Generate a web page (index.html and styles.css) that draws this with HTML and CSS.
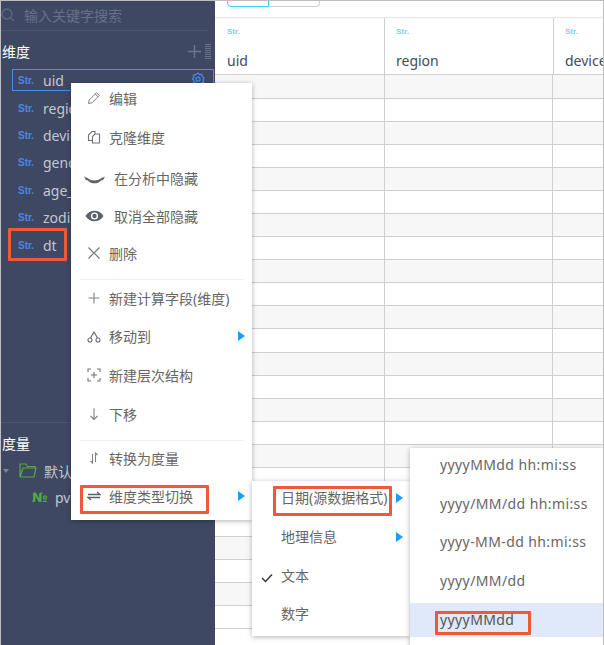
FILE: index.html
```html
<!DOCTYPE html>
<html lang="zh">
<head>
<meta charset="utf-8">
<title>维度</title>
<link rel="stylesheet" href="styles.css">
</head>
<body>
<div class="frame">
  <aside class="side">
    <div class="search">
      <svg class="ico-search" width="14" height="14" viewBox="0 0 14 14"><circle cx="6" cy="6" r="5" fill="none" stroke="#5f6880" stroke-width="1.3"/><path d="M9.6 9.6L13 13" stroke="#5f6880" stroke-width="1.3"/></svg>
      <span>输入关键字搜索</span>
    </div>
    <div class="sec-head">
      <span>维度</span>
      <svg class="head-plus" width="13" height="13" viewBox="0 0 13 13"><path d="M6.5 0v13M0 6.5h13" stroke="#6f778c" stroke-width="1.4"/></svg>
      <span class="head-grip"></span>
    </div>
    <ul class="fields">
      <li class="field selected"><b>Str.</b><span>uid</span>
        <svg class="gear" width="14" height="14" viewBox="0 0 14 14"><path d="M7 1l1.500 1.600 2.200-.3.500 2.100L13 6l-1 2 .6 2-2 .7-.9 2-2-.7-1.700.700-1.100-1.800-2.100-.300.100-2.100L1.500 7l1.300-1.700-.4-2.100 2.100-.5z" fill="none" stroke="#3f8cf0" stroke-width="1.300"/><circle cx="7" cy="7.200" r="2" fill="none" stroke="#3f8cf0" stroke-width="1.300"/></svg>
      </li>
      <li class="field"><b>Str.</b><span>region</span></li>
      <li class="field"><b>Str.</b><span>device</span></li>
      <li class="field"><b>Str.</b><span>gender</span></li>
      <li class="field"><b>Str.</b><span>age_level</span></li>
      <li class="field"><b>Str.</b><span>zodiac</span></li>
      <li class="field"><b>Str.</b><span>dt</span></li>
    </ul>
    <div class="measures">
      <div class="sec-head sec-measure"><span>度量</span></div>
      <div class="folder">
        <i class="caret"></i>
        <svg width="18" height="15" viewBox="0 0 18 15"><path d="M1 14V1h6l1.500 2.500H16V5M1 14h14l2-9H4L1 14" fill="none" stroke="#55a944" stroke-width="1.200"/></svg>
        <span>默认</span>
      </div>
      <div class="measure"><b>№</b><span>pv</span></div>
    </div>
  </aside>
  <main class="main">
    <div class="toolbar">
      <div class="switch"><span class="on"></span><span class="off"></span></div>
    </div>
    <div class="thead">
      <div class="th"><small>Str.</small><span>uid</span></div>
      <div class="th"><small>Str.</small><span>region</span></div>
      <div class="th"><small>Str.</small><span>device</span></div>
    </div>
    <div class="tbody">
      <div class="tr"><i></i><i></i><i></i></div><div class="tr"><i></i><i></i><i></i></div>
      <div class="tr"><i></i><i></i><i></i></div><div class="tr"><i></i><i></i><i></i></div>
      <div class="tr"><i></i><i></i><i></i></div><div class="tr"><i></i><i></i><i></i></div>
      <div class="tr"><i></i><i></i><i></i></div><div class="tr"><i></i><i></i><i></i></div>
      <div class="tr"><i></i><i></i><i></i></div><div class="tr"><i></i><i></i><i></i></div>
      <div class="tr"><i></i><i></i><i></i></div><div class="tr"><i></i><i></i><i></i></div>
      <div class="tr"><i></i><i></i><i></i></div><div class="tr"><i></i><i></i><i></i></div>
      <div class="tr"><i></i><i></i><i></i></div><div class="tr"><i></i><i></i><i></i></div>
      <div class="tr"><i></i><i></i><i></i></div><div class="tr"><i></i><i></i><i></i></div>
      <div class="tr"><i></i><i></i><i></i></div><div class="tr"><i></i><i></i><i></i></div>
      <div class="tr"><i></i><i></i><i></i></div><div class="tr"><i></i><i></i><i></i></div>
      <div class="tr"><i></i><i></i><i></i></div><div class="tr"><i></i><i></i><i></i></div>
    </div>
  </main>

  <div class="menu menu-main">
    <div class="mi"><svg class="mi-ico" viewBox="0 0 14 14"><path d="M1.500 12.500l.7-3.500L9.500 1.700l2.800 2.800L5 11.800zM8.300 3l2.800 2.800" fill="none" stroke="#7c8088" stroke-width="1"/></svg><span>编辑</span></div>
    <div class="mi"><svg class="mi-ico" viewBox="0 0 14 14"><path d="M5 10.500H1.500V5L5 1.500h3V4M5.500 6.500L8 4h4.500v9h-7z" fill="none" stroke="#6f7278" stroke-width="1.100"/></svg><span>克隆维度</span></div>
    <div class="mi mi-wide"><svg class="mi-ico-w" viewBox="0 -3 22 12"><path d="M0 1.500L3.500 3C8 6.500 14 6.500 18.500 3L22 1.500 20 5l-2 .5C14 9.500 8 9.500 4 5.500L2 5z" fill="#5d6168"/></svg><span>在分析中隐藏</span></div>
    <div class="mi mi-wide"><svg class="mi-ico-w" viewBox="0 0 18 12"><path d="M0 6c4-7 14-7 18 0-4 7-14 7-18 0z" fill="#5d6168"/><circle cx="9" cy="6" r="3.600" fill="#fff"/><circle cx="9" cy="6" r="2.200" fill="#5d6168"/></svg><span>取消全部隐藏</span></div>
    <div class="mi"><svg class="mi-ico" viewBox="0 0 14 14"><path d="M1.500 1.500l11 11M12.500 1.500l-11 11" stroke="#6f7278" stroke-width="1.100"/></svg><span>删除</span></div>
    <hr class="sep">
    <div class="mi"><svg class="mi-ico" viewBox="0 0 14 14"><path d="M7 1.500v11M1.500 7h11" stroke="#7c8088" stroke-width="1.100"/></svg><span>新建计算字段(维度)</span></div>
    <div class="mi"><svg class="mi-ico" viewBox="0 0 14 14"><circle cx="3" cy="11" r="2" fill="none" stroke="#6f7278" stroke-width="1.100"/><circle cx="11" cy="11" r="2" fill="none" stroke="#6f7278" stroke-width="1.100"/><path d="M3.500 9L7 3l3.500 6" fill="none" stroke="#6f7278" stroke-width="1.300"/></svg><span>移动到</span><i class="tri"></i></div>
    <div class="mi"><svg class="mi-ico" viewBox="0 0 14 14"><path d="M4 1H1v3M10 1h3v3M4 13H1v-3M10 13h3v-3M7 4v6M4 7h6" fill="none" stroke="#6f7278" stroke-width="1.100"/></svg><span>新建层次结构</span></div>
    <div class="mi"><svg class="mi-ico" viewBox="0 0 14 14"><path d="M7 1.500v11M3.500 9L7 12.500 10.500 9" fill="none" stroke="#7c8088" stroke-width="1.100"/></svg><span>下移</span></div>
    <hr class="sep sep-2">
    <div class="mi"><svg class="mi-ico" viewBox="0 0 14 14"><path d="M5.500 3v9L3.500 10M8.500 11V2l2 2" fill="none" stroke="#7c8088" stroke-width="1.100"/></svg><span>转换为度量</span></div>
    <div class="mi"><svg class="mi-ico" viewBox="0 0 14 14"><path d="M1 5.500h12L10 3M13 8.500H1L4 11" fill="none" stroke="#5d6168" stroke-width="1.300"/></svg><span>维度类型切换</span><i class="tri"></i></div>
  </div>

  <div class="menu menu-sub">
    <div class="si"><span>日期(源数据格式)</span><i class="tri"></i></div>
    <div class="si"><span>地理信息</span><i class="tri"></i></div>
    <div class="si"><svg class="check" width="12" height="10" viewBox="0 0 12 10"><path d="M1 5l3.500 3.500L11 1.500" fill="none" stroke="#333" stroke-width="1.400"/></svg><span>文本</span></div>
    <div class="si"><span>数字</span></div>
  </div>

  <div class="menu menu-date">
    <div class="di">yyyyMMdd hh:mi:ss</div>
    <div class="di">yyyy/MM/dd hh:mi:ss</div>
    <div class="di">yyyy-MM-dd hh:mi:ss</div>
    <div class="di">yyyy/MM/dd</div>
    <div class="di active">yyyyMMdd</div>
  </div>

  <div class="mark mark-dt"></div>
  <div class="mark mark-switch"></div>
  <div class="mark mark-date"></div>
  <div class="mark mark-fmt"></div>
</div>
</body>
</html>
```
FILE: styles.css
```css
* { box-sizing: border-box; }
html, body { margin: 0; padding: 0; background: #fff; }
body { font-family: "Noto Sans", "Noto Sans CJK SC", sans-serif; }

.frame {
  position: relative;
  width: 604px;
  height: 645px;
  display: flex;
  overflow: hidden;
  border: 1px solid #bdbdbd;
  border-bottom: 0;
}

/* sidebar */
.side {
  width: 214px;
  flex: none;
  background: #3e4862;
  color: #c3c7d0;
  display: flex;
  flex-direction: column;
}
.search {
  height: 30px;
  margin-right: 6px;
  display: flex;
  align-items: center;
  border-bottom: 1px solid #4c556e;
  font-size: 14px;
  color: #687088;
  padding-bottom: 1px;
}
.ico-search { margin-right: 9px; }
.sec-head {
  display: flex;
  align-items: center;
  height: 22px;
  margin-top: 11px;
  padding: 0 0 4px 1px;
  font-size: 14px;
  color: #fff;
}
.head-plus { margin-left: auto; }
.head-grip {
  width: 6px;
  height: 15px;
  margin: 0 4px 0 4px;
  background: repeating-linear-gradient(0deg, #6a7288 0 1px, transparent 1px 2px);
}
.fields { list-style: none; margin: 3px 0 0; padding: 0; }
.field {
  height: 27.4px;
  display: flex;
  align-items: center;
  padding-left: 17px;
  font-size: 14px;
  position: relative;
}
.field b {
  width: 25px;
  font: bold 10px "Liberation Sans", sans-serif;
  color: #4a86e8;
}
.field span { color: #c3c7d0; }
.selected::before {
  content: "";
  position: absolute;
  left: 11px;
  right: 1px;
  top: 2px;
  bottom: 3px;
  border: 1px solid #4a8bf0;
}
.gear { position: absolute; left: 190px; top: 5px; }
.measures { margin-top: auto; padding-bottom: 134px; }
.sec-measure {
  border-top: 1px solid #4c556e;
  margin-top: 0;
  height: 34px;
  padding: 7px 0 0 1px;
}
.folder {
  display: flex;
  align-items: center;
  height: 27px;
  padding-left: 2px;
  font-size: 14px;
  margin-top: 1px;
}
.caret {
  width: 0;
  height: 0;
  border: 3px solid transparent;
  border-top: 4px solid #7c8394;
  border-bottom: 0;
  margin-right: 10px;
}
.folder svg { margin-right: 7px; }
.measure {
  display: flex;
  align-items: center;
  height: 27px;
  padding-left: 31px;
  font-size: 14px;
}
.measure b {
  color: #55a944;
  font: bold 13px "DejaVu Sans", sans-serif;
  width: 23px;
}

/* main table */
.main { flex: 1; min-width: 0; display: flex; flex-direction: column; overflow: hidden; }
.toolbar { height: 16px; flex: none; box-shadow: 0 1px 1px #e6e6e6; position: relative; }
.switch { display: flex; margin: -6px 0 0 12px; width: 93px; height: 12px; }
.on { width: 42px; border: 1px solid #3ed0ea; border-radius: 0 0 0 4px; }
.off { width: 51px; border: 1px solid #cfcfcf; border-left: 0; border-radius: 0 0 4px 0; }
.thead {
  display: grid;
  grid-template-columns: 170px 169px 100px;
  height: 58px;
  flex: none;
  border-bottom: 1px solid #cfcfcf;
}
.th {
  border-right: 1px solid #cfcfcf;
  padding: 8px 0 0 12px;
  display: flex;
  flex-direction: column;
  font-size: 14px;
  color: #3f4a5c;
  white-space: nowrap;
}
.th + .th { padding-left: 11px; }
.th small {
  font: bold 8px "Liberation Sans", sans-serif;
  color: #7fcfe8;
  height: 26px;
  padding-top: 2px;
}
.tbody { flex: 1; }
.tr {
  display: grid;
  grid-template-columns: 170px 168px 100px;
  height: 23.05px;
  border-bottom: 1px solid #cfcfcf;
}
.tr:first-child { height: 24px; }
.tr:nth-child(odd) { background: #f7f7f7; }
.tr i { border-right: 1px solid #cfcfcf; }

/* context menus */
.menu {
  position: absolute;
  background: #fff;
  box-shadow: 0 1px 5px rgba(0, 0, 0, .3);
  color: #666;
  font-size: 14px;
}
.menu-main {
  left: 70px;
  top: 82px;
  width: 181px;
  height: 437px;
  padding: 0 9px;
}
.mi {
  height: 38.7px;
  display: flex;
  align-items: center;
  padding-left: 7px;
  position: relative;
}
.mi span { margin-left: 8px; }
.mi-ico { width: 14px; height: 14px; flex: none; }
.mi-ico-w { width: 21px; height: 12px; flex: none; margin-left: -3px; }
.mi-wide { padding-top: 4px; }
.mi-wide span { margin-left: 9px; }
.tri {
  position: absolute;
  right: -2px;
  top: 14px;
  border: 5px solid transparent;
  border-left: 7px solid #1e9bf5;
  border-right: 0;
}
.sep { margin: 7px 0 -2px; border: 0; border-top: 1px solid #f0f0f0; height: 0; }
.sep-2 { margin: 7px 0 -3px; }
.mi:first-child { margin-top: -4px; }
.menu-sub {
  left: 251px;
  top: 480px;
  width: 158px;
  height: 155px;
  z-index: 1;
}
.si {
  height: 38.7px;
  display: flex;
  align-items: center;
  padding: 0 0 6px 29px;
  position: relative;
}
.si .tri { right: 7px; top: 12px; }
.check { position: absolute; left: 9px; top: 15px; }
.menu-date {
  left: 409px;
  top: 447px;
  width: 194px;
  height: 198px;
  z-index: 2;
  letter-spacing: .4px;
}
.di {
  height: 38.7px;
  display: flex;
  align-items: center;
  padding: 0 0 6px 30px;
}
.di.active {
  background: #dfe9f9;
  height: 34px;
  padding-bottom: 0;
  color: #555;
}

/* red annotation boxes */
.mark { position: absolute; border: 3px solid #f0583a; z-index: 3; border-radius: 1px; }
.mark-dt { left: 7px; top: 227px; width: 59px; height: 33px; }
.mark-switch { left: 79px; top: 484px; width: 129px; height: 29px; }
.mark-date { left: 272px; top: 485px; width: 119px; height: 30px; }
.mark-fmt { left: 434px; top: 610px; width: 96px; height: 24px; }
```
